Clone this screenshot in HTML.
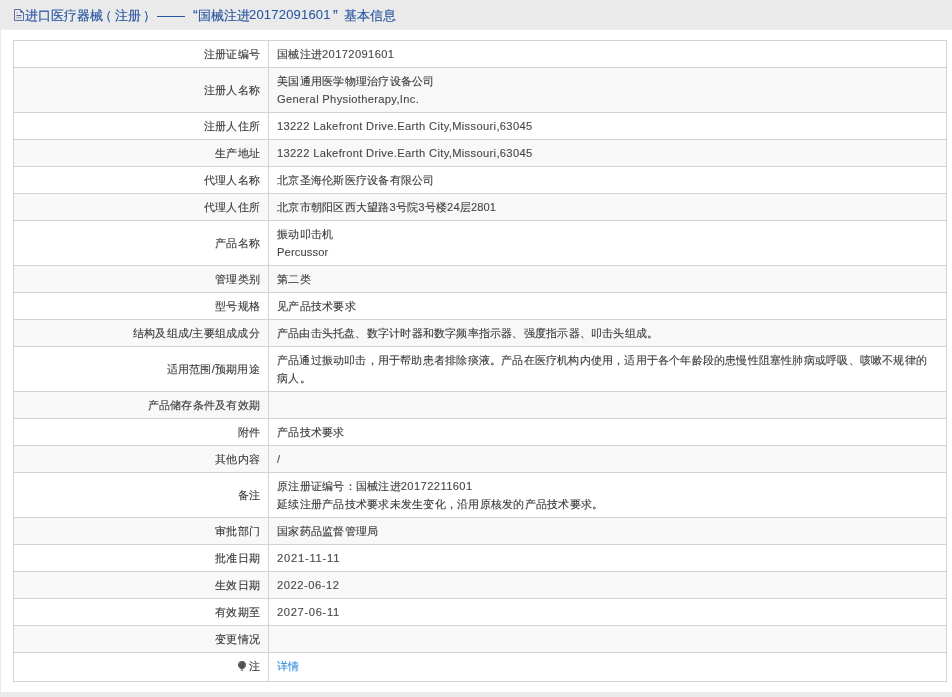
<!DOCTYPE html>
<html><head><meta charset="utf-8">
<style>
html,body{margin:0;padding:0}
body{width:952px;height:697px;background:#eaeaea;font-family:"Liberation Sans",sans-serif;overflow:hidden;position:relative}
.hd{will-change:transform;position:absolute;left:0;top:0;width:952px;height:29px}
.hline{position:absolute;left:1px;top:29px;width:951px;height:1px;background:#f1f1f1}
.hd .ic{position:absolute;left:14px;top:9px}
.dash{position:absolute;left:157px;top:16px;width:28px;height:1px;background:#2855a0}
.hd .tt{-webkit-text-stroke:0.15px #2855a0;position:absolute;top:7px;font-size:13px;line-height:18px;color:#2855a0;white-space:nowrap}
.panel{position:absolute;left:1px;top:30px;width:951px;height:662px;background:#fff}
table{will-change:transform;position:absolute;left:12px;top:10px;border-collapse:collapse;width:934px;table-layout:fixed}
td{-webkit-text-stroke:0.12px;letter-spacing:0.25px;border:1px solid #d3d3d3;padding:4px 8px;font-size:11.16px;line-height:18px;color:#3a3a3a;vertical-align:middle;white-space:nowrap;overflow:hidden}
td.l{width:238px;text-align:right;color:#3a3a3a}
tr:nth-child(even) td{background:#f8f8f8}
tr.last td{height:19px;padding-top:3px;padding-bottom:6px}
.e{font-size:11.16px;color:#484848}
.bulb{vertical-align:-1px;margin-right:3px}
a{color:#3d8ee0;text-decoration:none}
</style></head><body>
<div class="hd">
<svg class="ic" width="10" height="12" viewBox="0 0 10 12"><path d="M0.5 0.5H6.5L9.5 3.5V11.5H0.5Z" fill="none" stroke="#5f6ea6" stroke-width="1"/><path d="M6.5 0.5V3.5H9.5Z" fill="#5a74b8" stroke="#5f6ea6" stroke-width="0.6"/><path d="M2.2 4H3.8" stroke="#9aa0b8" stroke-width="1"/><path d="M2.5 6.6H7.5" stroke="#44548a" stroke-width="1"/><rect x="2.3" y="8" width="5.2" height="1.5" fill="#b4b8c8"/></svg>
<div class="tt" style="left:25px">进口医疗器械</div>
<div class="tt" style="left:99px">（</div>
<div class="tt" style="left:115px">注册</div>
<div class="tt" style="left:143px">）</div>
<div class="dash"></div>
<div class="tt" style="left:193px;top:6px;font-size:14px">“</div>
<div class="tt" style="left:198px">国械注进</div>
<div class="tt" style="left:249px;top:6px;letter-spacing:0.2px;-webkit-text-stroke:0.05px">20172091601</div>
<div class="tt" style="left:333px;top:6px;font-size:14px">”</div>
<div class="tt" style="left:344px">基本信息</div>
</div>
<div class="hline"></div>
<div class="panel">
<table>
<tr><td class="l">注册证编号</td><td>国械注进<span class="e" style="letter-spacing:0.380px">20172091601</span></td></tr>
<tr><td class="l">注册人名称</td><td>美国通用医学物理治疗设备公司<br><span class="e" style="letter-spacing:0.320px">General Physiotherapy,Inc.</span></td></tr>
<tr><td class="l">注册人住所</td><td><span class="e" style="letter-spacing:0.335px">13222 Lakefront Drive.Earth City,Missouri,63045</span></td></tr>
<tr><td class="l">生产地址</td><td><span class="e" style="letter-spacing:0.335px">13222 Lakefront Drive.Earth City,Missouri,63045</span></td></tr>
<tr><td class="l">代理人名称</td><td>北京圣海伦斯医疗设备有限公司</td></tr>
<tr><td class="l">代理人住所</td><td>北京市朝阳区西大望路<span class="e" style="letter-spacing:0.086px">3</span>号院<span class="e" style="letter-spacing:0.086px">3</span>号楼<span class="e" style="letter-spacing:0.086px">24</span>层<span class="e" style="letter-spacing:0.086px">2801</span></td></tr>
<tr><td class="l">产品名称</td><td>振动叩击机<br><span class="e" style="letter-spacing:0.125px">Percussor</span></td></tr>
<tr><td class="l">管理类别</td><td>第二类</td></tr>
<tr><td class="l">型号规格</td><td>见产品技术要求</td></tr>
<tr><td class="l">结构及组成/主要组成成分</td><td><span style="letter-spacing:0.214px">产品由击头托盘、数字计时器和数字频率指示器、强度指示器、叩击头组成。</span></td></tr>
<tr><td class="l">适用范围/预期用途</td><td><span style="letter-spacing:0.206px">产品通过振动叩击，用于帮助患者排除痰液。产品在医疗机构内使用，适用于各个年龄段的患慢性阻塞性肺病或呼吸、咳嗽不规律的</span><br>病人。</td></tr>
<tr><td class="l">产品储存条件及有效期</td><td></td></tr>
<tr><td class="l">附件</td><td>产品技术要求</td></tr>
<tr><td class="l">其他内容</td><td><span class="e" style="letter-spacing:0.000px">/</span></td></tr>
<tr><td class="l">备注</td><td>原注册证编号：国械注进<span class="e" style="letter-spacing:0.400px">20172211601</span><br>延续注册产品技术要求未发生变化，沿用原核发的产品技术要求。</td></tr>
<tr><td class="l">审批部门</td><td>国家药品监督管理局</td></tr>
<tr><td class="l">批准日期</td><td><span class="e" style="letter-spacing:0.778px">2021-11-11</span></td></tr>
<tr><td class="l">生效日期</td><td><span class="e" style="letter-spacing:0.556px">2022-06-12</span></td></tr>
<tr><td class="l">有效期至</td><td><span class="e" style="letter-spacing:0.667px">2027-06-11</span></td></tr>
<tr><td class="l">变更情况</td><td></td></tr>
<tr class="last"><td class="l"><svg class="bulb" width="8" height="10" viewBox="0 0 8 10"><path d="M4 0C1.8 0 0 1.7 0 3.9C0 5.4 0.9 6.4 2.2 7.3L2.6 8.3H5.4L5.8 7.3C7.1 6.4 8 5.4 8 3.9C8 1.7 6.2 0 4 0Z" fill="#525252"/><path d="M5.6 1.2C6.6 1.9 7.1 3 7 4.3" stroke="#4d6a99" stroke-width="1" fill="none"/><path d="M2.2 1.7L1.6 2.9" stroke="#9a9a9a" stroke-width="0.9"/><rect x="2.8" y="8.6" width="2.4" height="1.4" fill="#8a8a8a"/></svg>注</td><td><a>详情</a></td></tr>
</table>
</div>
</body></html>
